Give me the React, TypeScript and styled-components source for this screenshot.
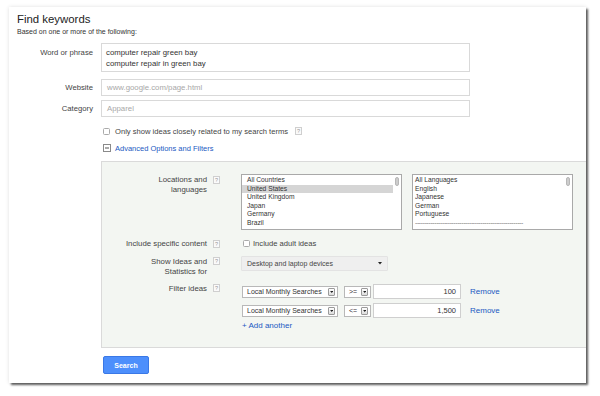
import React from 'react';
import styled, { createGlobalStyle } from 'styled-components';

const GlobalStyle = createGlobalStyle`
  html, body { margin: 0; padding: 0; background: #fff; }
  body { font-family: "Liberation Sans", Arial, sans-serif; color: #333; }
  * { box-sizing: border-box; }
`;

const Page = styled.div`
  width: 600px;
  height: 396px;
  padding: 7px 0 0 9px;
  overflow: hidden;
`;

const Card = styled.div`
  width: 577px;
  height: 376px;
  background: #fff;
  box-shadow: 2px 2px 2px rgba(0, 0, 0, 0.62), 0 0 4px rgba(0, 0, 0, 0.12);
  display: flex;
  flex-direction: column;
`;

const Header = styled.div`
  padding: 6px 0 0 8px;
`;

const Title = styled.h1`
  margin: 0;
  font-size: 11.4px;
  line-height: 13px;
  font-weight: normal;
  color: #222;
`;

const Subtitle = styled.div`
  margin-top: 1px;
  font-size: 7px;
  line-height: 9px;
  color: #333;
`;

const Form = styled.div`
  display: flex;
  flex-direction: column;
  margin-top: 7px;
`;

const FieldRow = styled.div<{ $mt?: number }>`
  display: flex;
  align-items: flex-start;
  margin-top: ${(p) => p.$mt ?? 0}px;
`;

const FieldLabel = styled.div<{ $pt: number }>`
  width: 84px;
  margin-right: 8px;
  padding-top: ${(p) => p.$pt}px;
  text-align: right;
  font-size: 7.7px;
  line-height: 11px;
  color: #444;
`;

const TextArea = styled.div`
  width: 369px;
  height: 29px;
  border: 1px solid #d9d9d9;
  padding: 2.5px 0 0 4px;
  font-size: 7.8px;
  line-height: 11.5px;
  color: #333;
`;

const TextInput = styled.div`
  width: 369px;
  height: 17px;
  border: 1px solid #d9d9d9;
  padding-left: 5px;
  font-size: 7.8px;
  line-height: 15px;
  color: #a8a8a8;
`;

const OptionRow = styled.div<{ $mt: number }>`
  display: flex;
  align-items: center;
  height: 11px;
  margin: ${(p) => p.$mt}px 0 0 94px;
`;

const Checkbox = styled.span<{ $ml?: number }>`
  display: inline-block;
  width: 7px;
  height: 7px;
  margin-left: ${(p) => p.$ml ?? 0}px;
  border: 1px solid #aaa;
  border-radius: 1.5px;
  background: #fff;
  flex: none;
`;

const OptionText = styled.span<{ $ml?: number }>`
  margin-left: ${(p) => p.$ml ?? 5}px;
  font-size: 7.6px;
  line-height: 11px;
  color: #444;
  white-space: nowrap;
`;

const Help = styled.span<{ $ml?: number; $mt?: number }>`
  display: inline-flex;
  align-items: center;
  justify-content: center;
  width: 7px;
  height: 8px;
  margin-left: ${(p) => p.$ml ?? 7}px;
  margin-top: ${(p) => p.$mt ?? 0}px;
  border: 1px solid #cfcfcf;
  background: #fafafa;
  font-size: 5.5px;
  line-height: 6px;
  color: #999;
  flex: none;
`;

const LinkText = styled.span<{ $size?: number; $ml?: number }>`
  margin-left: ${(p) => p.$ml ?? 0}px;
  font-size: ${(p) => p.$size ?? 8}px;
  line-height: 11px;
  color: #2159c2;
  white-space: nowrap;
`;

const Panel = styled.div`
  margin: 7.5px 0 0 92px;
  width: 485px;
  height: 187px;
  background: #f3f6f2;
  border: 1px solid #dadada;
  border-right: none;
  padding-top: 12px;
  display: flex;
  flex-direction: column;
`;

const PanelRow = styled.div<{ $mt?: number }>`
  display: flex;
  align-items: flex-start;
  margin-top: ${(p) => p.$mt ?? 0}px;
`;

const PanelLabel = styled.div<{ $pt?: number }>`
  width: 105px;
  padding-top: ${(p) => p.$pt ?? 0}px;
  text-align: right;
  font-size: 7.8px;
  line-height: 10px;
  color: #444;
`;

const PanelField = styled.div`
  margin-left: 21px;
  display: flex;
  align-items: flex-start;
`;

const Lists = styled.div`
  display: flex;
  gap: 10px;
`;

const ListBox = styled.div`
  width: 161px;
  height: 56px;
  border: 1px solid #a9a9a9;
  background: #fff;
  display: flex;
  overflow: hidden;
`;

const ListItems = styled.div`
  flex: 1;
  padding-top: 1px;
  font-size: 6.7px;
  line-height: 8.6px;
  color: #333;
  white-space: nowrap;
  overflow: hidden;
`;

const ListItem = styled.div<{ $selected?: boolean; $pl: number }>`
  padding-left: ${(p) => p.$pl}px;
  background: ${(p) => (p.$selected ? '#d5d5d5' : 'transparent')};
`;

const Divider = styled.div<{ $pl: number }>`
  padding-left: ${(p) => p.$pl}px;
  color: #777;
  letter-spacing: -0.3px;
`;

const ScrollTrack = styled.div`
  width: 8px;
  flex: none;
  padding: 2px 0 0 2px;
`;

const ScrollThumb = styled.div`
  width: 4px;
  height: 9px;
  border-radius: 2px;
  background: #cdcdcd;
  border: 1px solid #b7b7b7;
`;

const InlineCheck = styled.div`
  display: flex;
  align-items: center;
  height: 11px;
`;

const Dropdown = styled.div`
  width: 147px;
  height: 15px;
  background: #efefef;
  border: 1px solid #e3e3e3;
  border-radius: 1px;
  padding: 0 5px;
  display: flex;
  align-items: center;
  justify-content: space-between;
  font-size: 7px;
  color: #444;
`;

const FilterStack = styled.div`
  display: flex;
  flex-direction: column;
`;

const FilterRow = styled.div<{ $mt?: number }>`
  display: flex;
  align-items: center;
  height: 15px;
  margin-top: ${(p) => p.$mt ?? 0}px;
`;

const SmallSelect = styled.div<{ $w: number; $ml: number }>`
  width: ${(p) => p.$w}px;
  height: 12px;
  margin-left: ${(p) => p.$ml}px;
  border: 1px solid #b8b8b8;
  background: #fff;
  padding-left: 4px;
  display: flex;
  align-items: center;
  justify-content: space-between;
  font-size: 7px;
  color: #333;
  white-space: nowrap;
`;

const ArrowBtn = styled.span`
  width: 7px;
  height: 8px;
  margin-right: 2px;
  border: 1px solid #9a9a9a;
  border-radius: 1px;
  background: linear-gradient(#fff, #dcdcdc);
  display: flex;
  align-items: center;
  justify-content: center;
  flex: none;
`;

const NumberInput = styled.div`
  width: 88px;
  height: 15px;
  margin-left: 2px;
  border: 1px solid #cfcfcf;
  background: #fff;
  padding-right: 4px;
  text-align: right;
  font-size: 7.5px;
  line-height: 13px;
  color: #333;
`;

const AddRow = styled.div`
  margin: 2px 0 0 1px;
  display: flex;
`;

const SearchButton = styled.button`
  margin: 8px 0 0 94px;
  width: 46px;
  height: 18px;
  padding: 0;
  background: #4d8ffc;
  border: 1px solid #3a78e6;
  border-radius: 2px;
  color: #fff;
  font-family: "Liberation Sans", Arial, sans-serif;
  font-weight: bold;
  font-size: 7px;
`;

const Triangle = ({ w = 5, h = 3 }: { w?: number; h?: number }) => (
  <svg width={w} height={h} viewBox="0 0 5 3" style={{ display: 'block' }}>
    <path d="M0 0 L5 0 L2.5 3 Z" fill="#222" />
  </svg>
);

const CollapseIcon = () => (
  <svg width="8" height="8" viewBox="0 0 8 8" style={{ display: 'block', flex: 'none' }}>
    <rect x="0.5" y="0.5" width="7" height="7" fill="#fff" stroke="#8a8a8a" />
    <line x1="2" y1="4" x2="6" y2="4" stroke="#555" strokeWidth="1" />
  </svg>
);

const locations = ['All Countries', 'United States', 'United Kingdom', 'Japan', 'Germany', 'Brazil'];
const languages = ['All Languages', 'English', 'Japanese', 'German', 'Portuguese'];

const filters = [
  { op: '>=', value: '100' },
  { op: '<=', value: '1,500' },
];

export default function App() {
  return (
    <>
      <GlobalStyle />
      <Page>
        <Card>
          <Header>
            <Title>Find keywords</Title>
            <Subtitle>Based on one or more of the following:</Subtitle>
          </Header>

          <Form>
            <FieldRow>
              <FieldLabel $pt={3.5}>Word or phrase</FieldLabel>
              <TextArea>
                <div>computer repair green bay</div>
                <div>computer repair in green bay</div>
              </TextArea>
            </FieldRow>
            <FieldRow $mt={7}>
              <FieldLabel $pt={3}>Website</FieldLabel>
              <TextInput>www.google.com/page.html</TextInput>
            </FieldRow>
            <FieldRow $mt={4}>
              <FieldLabel $pt={3}>Category</FieldLabel>
              <TextInput>Apparel</TextInput>
            </FieldRow>
          </Form>

          <OptionRow $mt={8.5}>
            <Checkbox />
            <OptionText>Only show ideas closely related to my search terms</OptionText>
            <Help>?</Help>
          </OptionRow>

          <OptionRow $mt={6}>
            <CollapseIcon />
            <LinkText $size={7.5} $ml={4}>Advanced Options and Filters</LinkText>
          </OptionRow>

          <Panel>
            <PanelRow>
              <PanelLabel $pt={0.5}>
                Locations and
                <br />
                languages
              </PanelLabel>
              <Help $ml={6} $mt={2}>?</Help>
              <PanelField>
                <Lists>
                  <ListBox>
                    <ListItems>
                      {locations.map((l) => (
                        <ListItem key={l} $pl={5} $selected={l === 'United States'}>
                          {l}
                        </ListItem>
                      ))}
                    </ListItems>
                    <ScrollTrack>
                      <ScrollThumb />
                    </ScrollTrack>
                  </ListBox>
                  <ListBox>
                    <ListItems>
                      {languages.map((l) => (
                        <ListItem key={l} $pl={2}>
                          {l}
                        </ListItem>
                      ))}
                      <Divider $pl={2}>{'-'.repeat(56)}</Divider>
                      <ListItem $pl={2}>Arabic</ListItem>
                    </ListItems>
                    <ScrollTrack>
                      <ScrollThumb />
                    </ScrollTrack>
                  </ListBox>
                </Lists>
              </PanelField>
            </PanelRow>

            <PanelRow $mt={8}>
              <PanelLabel $pt={0.5}>Include specific content</PanelLabel>
              <Help $ml={6} $mt={1.5}>?</Help>
              <PanelField>
                <InlineCheck>
                  <Checkbox $ml={2} />
                  <OptionText $ml={3}>Include adult ideas</OptionText>
                </InlineCheck>
              </PanelField>
            </PanelRow>

            <PanelRow $mt={7}>
              <PanelLabel $pt={1}>
                Show Ideas and
                <br />
                Statistics for
              </PanelLabel>
              <Help $ml={6} $mt={1}>?</Help>
              <PanelField>
                <Dropdown>
                  <span>Desktop and laptop devices</span>
                  <Triangle w={4} h={2.5} />
                </Dropdown>
              </PanelField>
            </PanelRow>

            <PanelRow $mt={7}>
              <PanelLabel $pt={0}>Filter ideas</PanelLabel>
              <Help $ml={6} $mt={0}>?</Help>
              <PanelField>
                <FilterStack>
                  {filters.map((f, i) => (
                    <FilterRow key={f.op} $mt={i === 0 ? 0 : 4}>
                      <SmallSelect $w={96} $ml={1}>
                        <span>Local Monthly Searches</span>
                        <ArrowBtn>
                          <Triangle w={3.5} h={2} />
                        </ArrowBtn>
                      </SmallSelect>
                      <SmallSelect $w={27} $ml={6}>
                        <span>{f.op}</span>
                        <ArrowBtn>
                          <Triangle w={3.5} h={2} />
                        </ArrowBtn>
                      </SmallSelect>
                      <NumberInput>{f.value}</NumberInput>
                      <LinkText $ml={9}>Remove</LinkText>
                    </FilterRow>
                  ))}
                  <AddRow>
                    <LinkText>+ Add another</LinkText>
                  </AddRow>
                </FilterStack>
              </PanelField>
            </PanelRow>
          </Panel>

          <div>
            <SearchButton>Search</SearchButton>
          </div>
        </Card>
      </Page>
    </>
  );
}
